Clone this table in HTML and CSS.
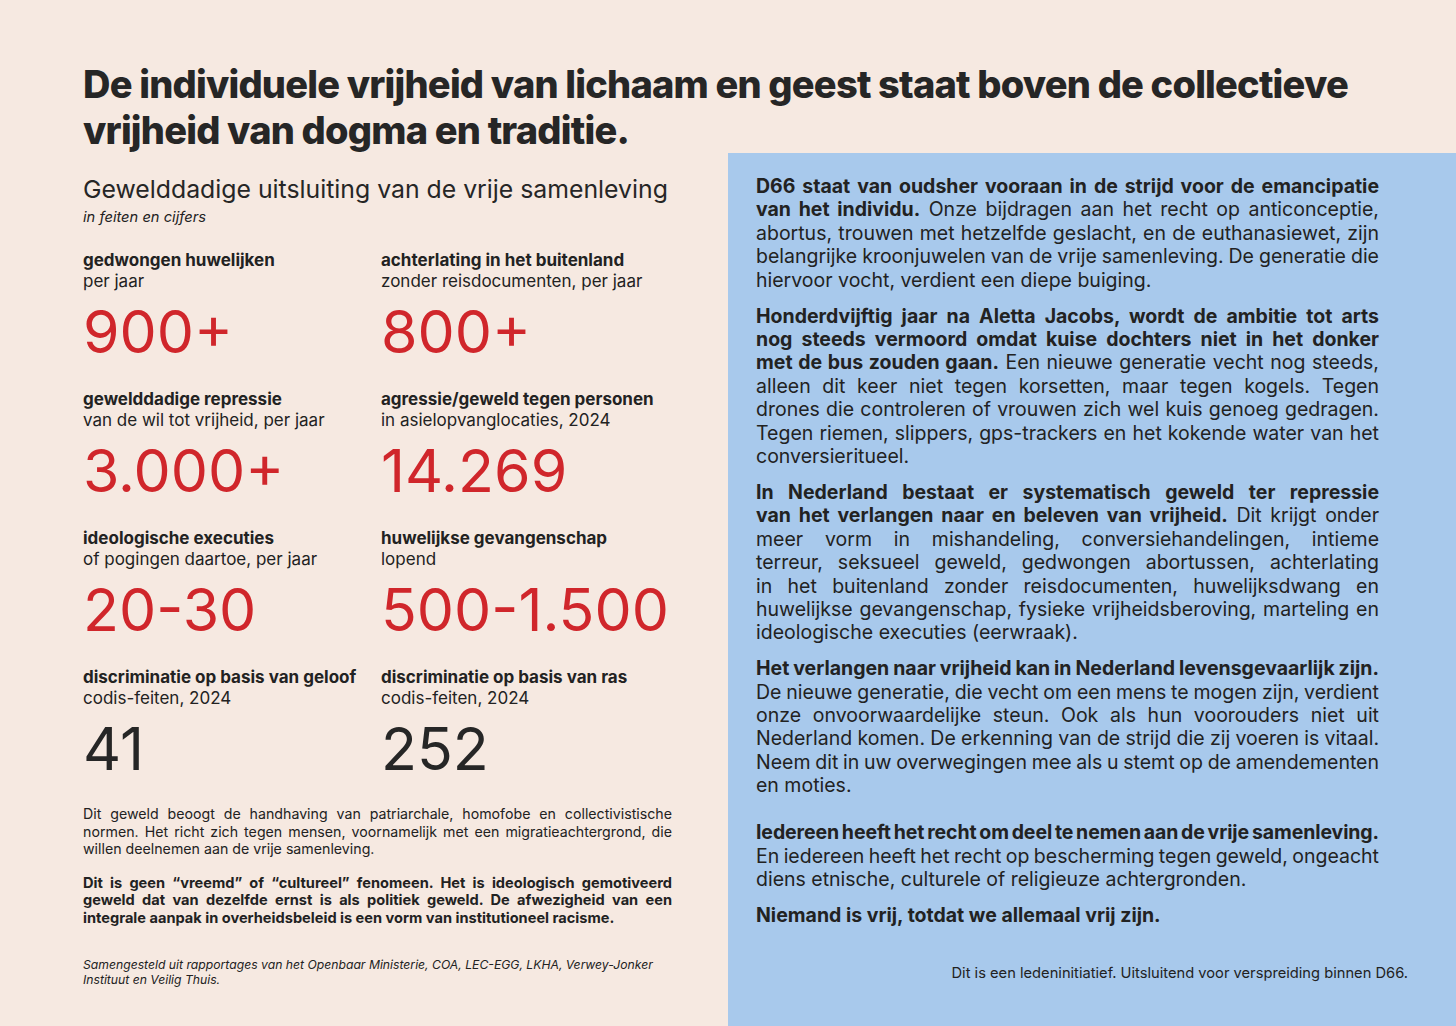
FILE: index.html
```html
<!DOCTYPE html>
<html lang="nl">
<head>
<meta charset="utf-8">
<title>De individuele vrijheid</title>
<link rel="stylesheet" href="styles.css">
</head>
<body>
<div class="page">
  <header class="header">
    <h1 class="title">De individuele vrijheid van lichaam en geest staat boven de collectieve vrijheid van dogma en traditie.</h1>
  </header>
  <main class="main">
    <section class="left">
      <h2 class="subtitle">Gewelddadige uitsluiting van de vrije samenleving</h2>
      <p class="tagline">in feiten en cijfers</p>
      <div class="stats">
        <div class="stat">
          <div class="stat-label">gedwongen huwelijken</div>
          <div class="stat-sub">per jaar</div>
          <div class="stat-num red">900+</div>
        </div>
        <div class="stat">
          <div class="stat-label">achterlating in het buitenland</div>
          <div class="stat-sub">zonder reisdocumenten, per jaar</div>
          <div class="stat-num red">800+</div>
        </div>
        <div class="stat">
          <div class="stat-label">gewelddadige repressie</div>
          <div class="stat-sub">van de wil tot vrijheid, per jaar</div>
          <div class="stat-num red">3.000+</div>
        </div>
        <div class="stat">
          <div class="stat-label">agressie/geweld tegen personen</div>
          <div class="stat-sub">in asielopvanglocaties, 2024</div>
          <div class="stat-num red">14.269</div>
        </div>
        <div class="stat">
          <div class="stat-label">ideologische executies</div>
          <div class="stat-sub">of pogingen daartoe, per jaar</div>
          <div class="stat-num red">20-30</div>
        </div>
        <div class="stat">
          <div class="stat-label">huwelijkse gevangenschap</div>
          <div class="stat-sub">lopend</div>
          <div class="stat-num red">500-1.500</div>
        </div>
        <div class="stat">
          <div class="stat-label">discriminatie op basis van geloof</div>
          <div class="stat-sub">codis-feiten, 2024</div>
          <div class="stat-num">41</div>
        </div>
        <div class="stat">
          <div class="stat-label">discriminatie op basis van ras</div>
          <div class="stat-sub">codis-feiten, 2024</div>
          <div class="stat-num">252</div>
        </div>
      </div>
      <p class="note">Dit geweld beoogt de handhaving van patriarchale, homofobe en collectivistische normen. Het richt zich tegen mensen, voornamelijk met een migratieachtergrond, die willen deelnemen aan de vrije samenleving.</p>
      <p class="note note-bold">Dit is geen “vreemd” of “cultureel” fenomeen. Het is ideologisch gemotiveerd geweld dat van dezelfde ernst is als politiek geweld. De afwezigheid van een integrale aanpak in overheidsbeleid is een vorm van institutioneel racisme.</p>
      <p class="source">Samengesteld uit rapportages van het Openbaar Ministerie, COA, LEC-EGG, LKHA, Verwey-Jonker Instituut en Veilig Thuis.</p>
    </section>
    <section class="panel">
      <p class="para">
        <span class="ln"><strong>D66 staat van oudsher vooraan in de strijd voor de emancipatie</strong></span>
        <span class="ln"><strong>van het individu.</strong> Onze bijdragen aan het recht op anticonceptie,</span>
        <span class="ln">abortus, trouwen met hetzelfde geslacht, en de euthanasiewet, zijn</span>
        <span class="ln">belangrijke kroonjuwelen van de vrije samenleving. De generatie die</span>
        <span class="ln-last">hiervoor vocht, verdient een diepe buiging.</span>
      </p>
      <p class="para">
        <span class="ln"><strong>Honderdvijftig jaar na Aletta Jacobs, wordt de ambitie tot arts</strong></span>
        <span class="ln"><strong>nog steeds vermoord omdat kuise dochters niet in het donker</strong></span>
        <span class="ln"><strong>met de bus zouden gaan.</strong> Een nieuwe generatie vecht nog steeds,</span>
        <span class="ln">alleen dit keer niet tegen korsetten, maar tegen kogels. Tegen</span>
        <span class="ln">drones die controleren of vrouwen zich wel kuis genoeg gedragen.</span>
        <span class="ln">Tegen riemen, slippers, gps-trackers en het kokende water van het</span>
        <span class="ln-last">conversieritueel.</span>
      </p>
      <p class="para">
        <span class="ln"><strong>In Nederland bestaat er systematisch geweld ter repressie</strong></span>
        <span class="ln"><strong>van het verlangen naar en beleven van vrijheid.</strong> Dit krijgt onder</span>
        <span class="ln">meer vorm in mishandeling, conversiehandelingen, intieme</span>
        <span class="ln">terreur, seksueel geweld, gedwongen abortussen, achterlating</span>
        <span class="ln">in het buitenland zonder reisdocumenten, huwelijksdwang en</span>
        <span class="ln">huwelijkse gevangenschap, fysieke vrijheidsberoving, marteling en</span>
        <span class="ln-last">ideologische executies (eerwraak).</span>
      </p>
      <p class="para">
        <span class="ln tight"><strong>Het verlangen naar vrijheid kan in Nederland levensgevaarlijk zijn.</strong></span>
        <span class="ln">De nieuwe generatie, die vecht om een mens te mogen zijn, verdient</span>
        <span class="ln">onze onvoorwaardelijke steun. Ook als hun voorouders niet uit</span>
        <span class="ln">Nederland komen. De erkenning van de strijd die zij voeren is vitaal.</span>
        <span class="ln">Neem dit in uw overwegingen mee als u stemt op de amendementen</span>
        <span class="ln-last">en moties.</span>
      </p>
      <p class="para para-gap">
        <span class="ln tighter"><strong>Iedereen heeft het recht om deel te nemen aan de vrije samenleving.</strong></span>
        <span class="ln">En iedereen heeft het recht op bescherming tegen geweld, ongeacht</span>
        <span class="ln-last">diens etnische, culturele of religieuze achtergronden.</span>
      </p>
      <p class="para">
        <span class="ln-last"><strong>Niemand is vrij, totdat we allemaal vrij zijn.</strong></span>
      </p>
      <p class="disclaimer">Dit is een ledeninitiatief. Uitsluitend voor verspreiding binnen D66.</p>
    </section>
  </main>
</div>
</body>
</html>
```
FILE: styles.css
```css
* { box-sizing: border-box; }

html, body {
  margin: 0;
  padding: 0;
}

body {
  background: #f6e9e1;
  color: #222222;
  font-family: Inter, "Noto Sans", "Liberation Sans", sans-serif;
  width: 1456px;
  height: 1026px;
  overflow: hidden;
}

.page {
  width: 1456px;
  height: 1026px;
  display: flex;
  flex-direction: column;
}

.header {
  padding: 61px 83px 0 83px;
}

.title {
  margin: 0;
  font-size: 38px;
  line-height: 46px;
  font-weight: 800;
  letter-spacing: -0.8px;
  color: #262626;
}

.main {
  flex: 1;
  display: grid;
  grid-template-columns: 728px 728px;
}

.left {
  padding: 21px 30px 0 83px;
}

.subtitle {
  margin: 0;
  font-size: 24.8px;
  line-height: 30px;
  font-weight: 400;
  color: #262626;
}

.tagline {
  margin: 4px 0 0 0;
  font-size: 14.7px;
  line-height: 18px;
  font-style: italic;
}

.stats {
  margin-top: 24px;
  display: grid;
  grid-template-columns: 298px 298px;
  row-gap: 28px;
}

.stat-label {
  font-size: 17px;
  line-height: 21px;
  font-weight: 700;
}

.stat-sub {
  font-size: 17px;
  line-height: 21px;
}

.stat-num {
  margin-top: 11px;
  font-size: 59px;
  line-height: 58px;
  font-weight: 400;
  color: #262626;
}

.stat-num.red {
  color: #d0262b;
}

.note {
  margin: 27px 0 0 0;
  width: 589px;
  font-size: 14.2px;
  line-height: 17.5px;
  text-align: justify;
}

.note-bold {
  margin-top: 17px;
  font-size: 14.6px;
  font-weight: 700;
}

.source {
  margin: 30px 0 0 0;
  font-size: 12.2px;
  line-height: 15px;
  font-style: italic;
}

.panel {
  background: #a8c9ec;
  padding: 22px 77px 0 28px;
  display: flex;
  flex-direction: column;
}

.para {
  margin: 0 0 12.5px 0;
  font-size: 19.5px;
  line-height: 23.4px;
  word-spacing: -1.5px;
}

.para strong {
  font-weight: 700;
}

.ln,
.ln-last {
  display: block;
  white-space: nowrap;
}

.ln {
  text-align: justify;
  text-align-last: justify;
}

.ln-last {
  text-align: left;
  word-spacing: normal;
}

.tight {
  word-spacing: -2px;
}

.tighter {
  word-spacing: -3px;
  letter-spacing: -0.1px;
}

.para-gap {
  margin-top: 11px;
}

.disclaimer {
  margin: 24px -29px 0 0;
  text-align: right;
  font-size: 14.7px;
  line-height: 18px;
}
```
